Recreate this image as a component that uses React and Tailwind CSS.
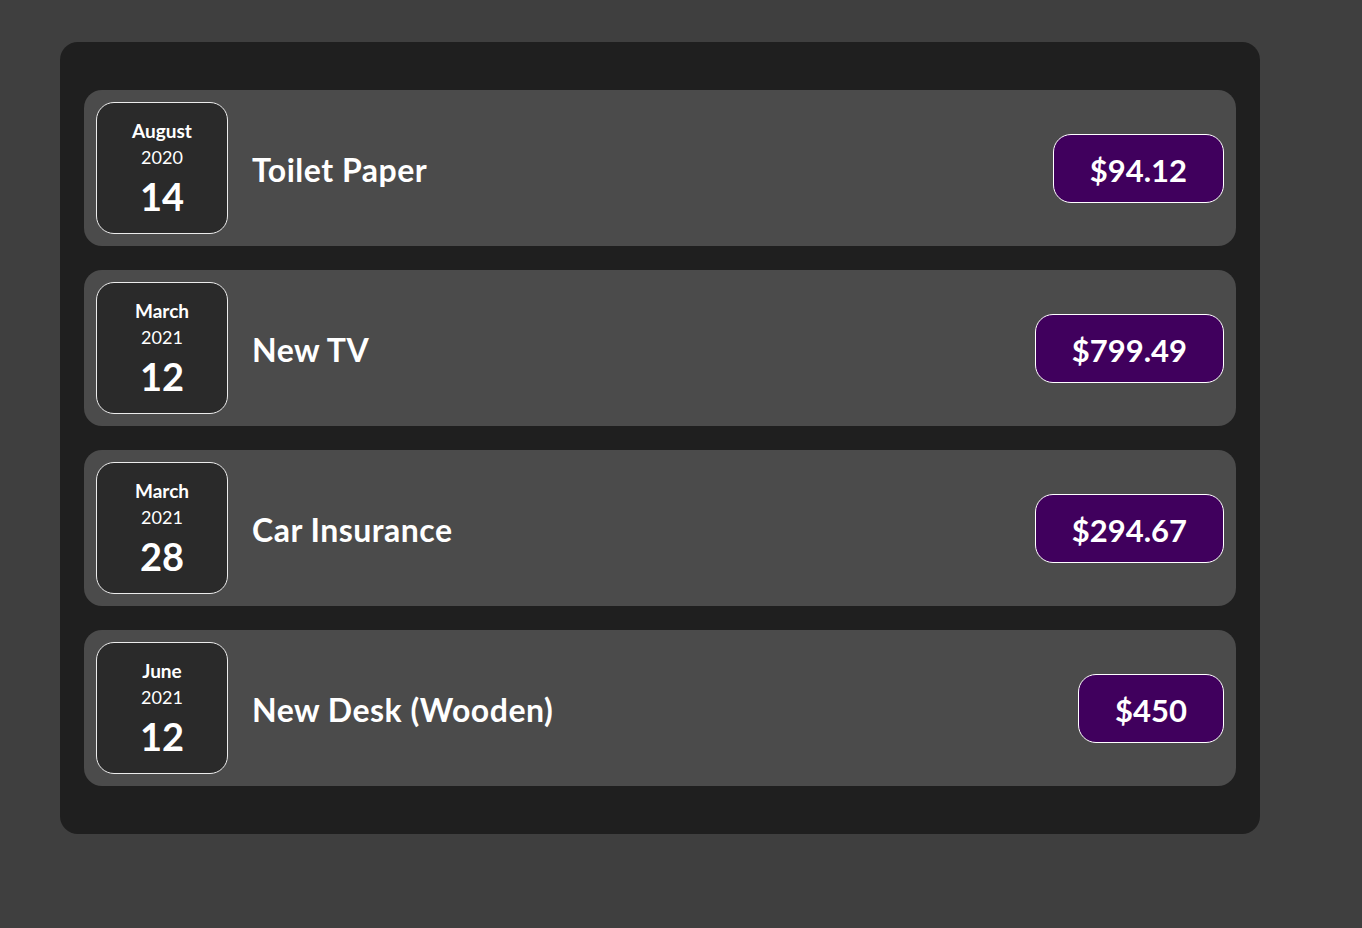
const expenses = [
  { id: 'e1', title: 'Toilet Paper', amount: '$94.12', month: 'August', year: '2020', day: '14' },
  { id: 'e2', title: 'New TV', amount: '$799.49', month: 'March', year: '2021', day: '12' },
  { id: 'e3', title: 'Car Insurance', amount: '$294.67', month: 'March', year: '2021', day: '28' },
  { id: 'e4', title: 'New Desk (Wooden)', amount: '$450', month: 'June', year: '2021', day: '12' },
]

function ExpenseDate({ month, year, day }) {
  return (
    <div className="w-[132px] h-[132px] shrink-0 flex flex-col justify-center items-center pt-[3px] border border-[#ececec] bg-[#2a2a2a] rounded-[18px] text-white">
      <div className="text-[19px] font-bold leading-[26px]">{month}</div>
      <div className="text-[18px] leading-[26px]">{year}</div>
      <div className="text-[38px] font-bold leading-[52px]">{day}</div>
    </div>
  )
}

function ExpenseItem({ expense }) {
  return (
    <div className="flex items-center p-3 my-6 rounded-[18px] bg-[#4b4b4b]">
      <ExpenseDate month={expense.month} year={expense.year} day={expense.day} />
      <div className="flex flex-1 items-center justify-between">
        <h2 className="flex-1 mx-6 pt-[4px] text-[32px] tracking-[0.5px] font-bold text-white">{expense.title}</h2>
        <div className="text-[31px] font-bold text-white bg-[#40005d] border border-white rounded-[18px] px-9 pt-[14px] pb-[10px] leading-[43px]">
          {expense.amount}
        </div>
      </div>
    </div>
  )
}

function App() {
  return (
    <div className="min-h-screen bg-[#3f3f3f] pt-[42px] pl-[60px] font-['Lato','Liberation_Sans',sans-serif]">
      <div className="w-[1200px] px-6 py-6 bg-[#1f1f1f] rounded-[18px]">
        {expenses.map((expense) =>
          <ExpenseItem key={expense.id} expense={expense} />
        )}
      </div>
    </div>
  )
}

export default App
